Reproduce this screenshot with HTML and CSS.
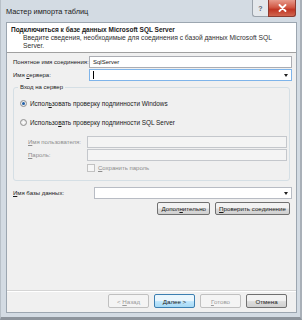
FILE: index.html
```html
<!DOCTYPE html>
<html lang="ru">
<head>
  <meta charset="UTF-8">
  <meta name="viewport" content="width=device-width, initial-scale=1.0">
  <title>Мастер импорта таблиц</title>
  <link rel="stylesheet" href="styles.css">
</head>
<body>
  <div class="window">
    <div class="titlebar">
      <span class="title">Мастер импорта таблиц</span>
      <div class="caption-buttons">
        <div class="cap-btn help">?</div>
        <div class="cap-btn close-box">
          <svg width="9" height="8" viewBox="0 0 9 8">
            <path d="M1.5 1 L7.5 7 M7.5 1 L1.5 7" stroke="#ffffff" stroke-width="1.8" stroke-linecap="round"/>
          </svg>
        </div>
      </div>
    </div>

    <div class="client">
      <div class="page-header">
        <div class="page-title">Подключиться к базе данных Microsoft SQL Server</div>
        <div class="page-desc">Введите сведения, необходимые для соединения с базой данных Microsoft SQL<br>Server.</div>
      </div>

      <div class="page-body">
        <div class="row">
          <label class="row-label">Понятное имя соединения:</label>
          <div class="textbox">SqlServer</div>
        </div>
        <div class="row">
          <label class="row-label">Имя <u>с</u>ервера:</label>
          <div class="combo focused"><span class="caret"></span><span class="arrow"></span></div>
        </div>

        <fieldset class="group">
          <legend>Вход на сервер</legend>
          <div class="option">
            <span class="radio checked"></span>
            <span>Испол<u>ь</u>зовать проверку подлинности Windows</span>
          </div>
          <div class="option">
            <span class="radio"></span>
            <span>Использо<u>в</u>ать проверку подлинности SQL Server</span>
          </div>
          <div class="row sub">
            <label class="row-label disabled"><u>И</u>мя пользователя:</label>
            <div class="textbox disabled"></div>
          </div>
          <div class="row sub">
            <label class="row-label disabled"><u>П</u>ароль:</label>
            <div class="textbox disabled"></div>
          </div>
          <div class="check-row">
            <span class="checkbox"></span>
            <span class="disabled"><u>С</u>охранить пароль</span>
          </div>
        </fieldset>

        <div class="row db">
          <label class="row-label"><u>И</u>мя базы данных:</label>
          <div class="combo"><span class="arrow"></span></div>
        </div>

        <div class="actions">
          <button class="btn">Допол<u>н</u>ительно</button>
          <button class="btn wide"><u>П</u>роверить соединение</button>
        </div>
      </div>

      <div class="footer">
        <button class="btn nav" disabled>&lt; <u>Н</u>азад</button>
        <button class="btn nav default"><u>Д</u>алее &gt;</button>
        <button class="btn nav" disabled><u>Г</u>отово</button>
        <button class="btn nav cancel">Отмена</button>
      </div>
    </div>
  </div>
</body>
</html>
```

FILE: styles.css
```css
body {
  margin: 0;
  padding: 0;
  background-color: #6b7078;
  font-family: "Liberation Sans", Arial, sans-serif;
  color: #1a1a1a;
}

.window {
  width: 302px;
  height: 320px;
  box-sizing: border-box;
  background-color: #d3dbe3;
  border-right: 2px solid #a9b0b8;
  border-bottom: 3px solid #8d949c;
  border-left: 1px solid #b8c0c8;
  padding: 0 3px 4px 5px;
  display: flex;
  flex-direction: column;
}

.titlebar {
  height: 22px;
  display: flex;
  align-items: flex-start;
}

.title {
  font-size: 7.4px;
  margin-top: 7px;
  color: #202020;
}

.caption-buttons {
  margin-left: auto;
  margin-right: 1px;
  display: flex;
}

.cap-btn {
  flex: none;
  height: 17px;
  box-sizing: border-box;
  display: flex;
  align-items: center;
  justify-content: center;
}

.help {
  width: 16px;
  font-size: 7px;
  font-weight: bold;
  color: #5d6670;
  border: 1px solid #9aa2ab;
  border-top: none;
  border-right: none;
  border-radius: 0 0 0 3px;
  background-color: #e4e8ec;
}

.close-box {
  width: 28px;
  border: 1px solid #8c3b30;
  border-top: none;
  border-radius: 0 0 3px 0;
  background-color: #c94434;
  background-image: linear-gradient(#e79a8b, #d25a47 45%, #c03624 60%, #d06650);
}

.client {
  flex: 1;
  background-color: #f0f0f0;
  border: 1px solid #9ca6b0;
  display: flex;
  flex-direction: column;
  font-size: 6px;
  white-space: nowrap;
}

.page-header {
  background-color: #ffffff;
  border-bottom: 1px solid #a0a0a0;
  height: 30px;
  box-sizing: border-box;
  padding: 2px 4px 0 4px;
}

.page-title {
  font-weight: bold;
  font-size: 6.5px;
  line-height: 9px;
}

.page-desc {
  padding-left: 12px;
  line-height: 8px;
  font-size: 6.7px;
  color: #303030;
}

.page-body {
  padding: 3px 4px 0 6px;
}

.row {
  display: flex;
  align-items: center;
  height: 12px;
  margin-bottom: 1px;
}

.row-label {
  width: 76px;
  flex: none;
}

.textbox,
.combo {
  flex: 1;
  height: 12px;
  box-sizing: border-box;
  background-color: #ffffff;
  border: 1px solid #abadb3;
  display: flex;
  align-items: center;
  padding-left: 3px;
}

.combo {
  border-color: #b8bcc4;
}

.combo.focused {
  border-color: #7eb4ea;
}

.caret {
  width: 1px;
  height: 8px;
  background-color: #000;
}

.arrow {
  margin-left: auto;
  margin-right: 3px;
  width: 0;
  height: 0;
  border-left: 2px solid transparent;
  border-right: 2px solid transparent;
  border-top: 3px solid #202020;
}

.textbox.disabled {
  background-color: #f4f4f4;
  border-color: #c4c7cc;
}

.disabled {
  color: #8d8d8d;
}

.group {
  margin: 3px 2px 0 0;
  border: 1px solid #d5dfe5;
  border-radius: 3px;
  padding: 5px 2px 7px 6px;
}

.group legend {
  padding: 0 2px;
  margin-left: -2px;
}

.option {
  display: flex;
  align-items: center;
  gap: 3px;
  height: 10px;
  margin: 3px 0 9px 0;
  font-size: 6.4px;
}

.radio {
  width: 7px;
  height: 7px;
  box-sizing: border-box;
  border: 1px solid #8f8f8f;
  border-radius: 50%;
  background: radial-gradient(#ffffff, #dcdcdc);
  display: flex;
  align-items: center;
  justify-content: center;
}

.radio.checked::after {
  content: "";
  width: 3px;
  height: 3px;
  border-radius: 50%;
  background-color: #1f5fa8;
}

.row.sub {
  padding-left: 8px;
  height: 11px;
  margin-bottom: 2px;
}

.row.sub .row-label {
  width: 59px;
}

.check-row {
  display: flex;
  align-items: center;
  gap: 3px;
  padding-left: 67px;
  height: 11px;
  margin-top: 2px;
}

.checkbox {
  width: 6px;
  height: 6px;
  border: 1px solid #c2c2c2;
  background-color: #f6f6f6;
}

.row.db {
  margin-top: 6px;
}

.row.db .row-label {
  width: 81px;
}

.actions {
  display: flex;
  justify-content: flex-end;
  gap: 5px;
  margin-top: 3px;
  padding-right: 2px;
}

.btn {
  font-family: inherit;
  font-size: 6.2px;
  color: #1a1a1a;
  height: 13px;
  padding: 0 3px;
  white-space: nowrap;
  border: 1px solid #707070;
  border-radius: 2px;
  background: linear-gradient(#f2f2f2 45%, #dcdcdc 55%, #d0d0d0);
}

.btn.wide {
  width: 75px;
}

.footer {
  margin-top: auto;
  border-top: 1px solid #d5d5d5;
  box-shadow: inset 0 1px 0 #ffffff;
  display: flex;
  justify-content: flex-end;
  gap: 5px;
  padding: 3px 9px 4px 0;
}

.btn.nav {
  width: 41px;
  height: 14px;
}

.btn.nav:disabled {
  color: #9a9a9a;
  border-color: #c0c0c0;
  background: #f4f4f4;
}

.btn.default {
  border-color: #3c7fb1;
  background: linear-gradient(#eaf6fd 45%, #bee6fd 55%, #a7d9f5);
}
```
